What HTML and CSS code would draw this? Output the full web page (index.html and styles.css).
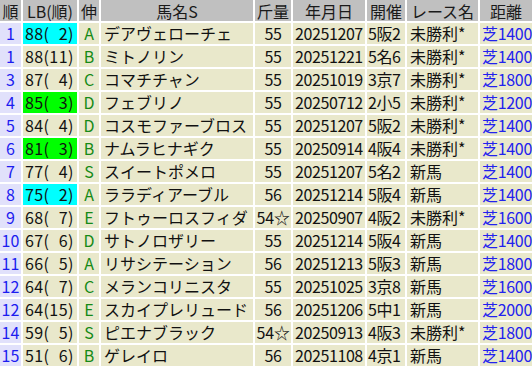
FILE: index.html
```html
<!DOCTYPE html>
<html lang="ja">
<head>
<meta charset="utf-8">
<title>LB</title>
<link rel="stylesheet" href="styles.css">
</head>
<body>
<div class="tbl">
  <div class="h">順</div><div class="h">LB(順)</div><div class="h">伸</div><div class="h">馬名S</div><div class="h">斤量</div><div class="h">年月日</div><div class="h">開催</div><div class="h">レース名</div><div class="h">距離</div>

  <div class="c rk">1</div><div class="c lb cyan">88(&#x2007;2)</div><div class="c nb">A</div><div class="c nm">デアヴェローチェ</div><div class="c wt">55</div><div class="c dt">20251207</div><div class="c pl">5阪2</div><div class="c rc">未勝利*</div><div class="c ds">芝1400</div>
  <div class="c rk">1</div><div class="c lb">88(11)</div><div class="c nb">B</div><div class="c nm">ミトノリン</div><div class="c wt">55</div><div class="c dt">20251221</div><div class="c pl">5名6</div><div class="c rc">未勝利*</div><div class="c ds">芝1400</div>
  <div class="c rk">3</div><div class="c lb">87(&#x2007;4)</div><div class="c nb">C</div><div class="c nm">コマチチャン</div><div class="c wt">55</div><div class="c dt">20251019</div><div class="c pl">3京7</div><div class="c rc">未勝利*</div><div class="c ds">芝1800</div>
  <div class="c rk">4</div><div class="c lb green">85(&#x2007;3)</div><div class="c nb">D</div><div class="c nm">フェブリノ</div><div class="c wt">55</div><div class="c dt">20250712</div><div class="c pl">2小5</div><div class="c rc">未勝利*</div><div class="c ds">芝1200</div>
  <div class="c rk">5</div><div class="c lb">84(&#x2007;4)</div><div class="c nb">D</div><div class="c nm">コスモファーブロス</div><div class="c wt">55</div><div class="c dt">20251207</div><div class="c pl">5阪2</div><div class="c rc">未勝利*</div><div class="c ds">芝1400</div>
  <div class="c rk">6</div><div class="c lb green">81(&#x2007;3)</div><div class="c nb">B</div><div class="c nm">ナムラヒナギク</div><div class="c wt">55</div><div class="c dt">20250914</div><div class="c pl">4阪4</div><div class="c rc">未勝利*</div><div class="c ds">芝1400</div>
  <div class="c rk">7</div><div class="c lb">77(&#x2007;4)</div><div class="c nb">S</div><div class="c nm">スイートポメロ</div><div class="c wt">55</div><div class="c dt">20251207</div><div class="c pl">5名2</div><div class="c rc">新馬</div><div class="c ds">芝1400</div>
  <div class="c rk">8</div><div class="c lb cyan">75(&#x2007;2)</div><div class="c nb">A</div><div class="c nm">ララディアーブル</div><div class="c wt">56</div><div class="c dt">20251214</div><div class="c pl">5阪4</div><div class="c rc">新馬</div><div class="c ds">芝1400</div>
  <div class="c rk">9</div><div class="c lb">68(&#x2007;7)</div><div class="c nb">E</div><div class="c nm">フトゥーロスフィダ</div><div class="c wt">54☆</div><div class="c dt">20250907</div><div class="c pl">4阪2</div><div class="c rc">未勝利*</div><div class="c ds">芝1600</div>
  <div class="c rk">10</div><div class="c lb">67(&#x2007;6)</div><div class="c nb">D</div><div class="c nm">サトノロザリー</div><div class="c wt">55</div><div class="c dt">20251214</div><div class="c pl">5阪4</div><div class="c rc">新馬</div><div class="c ds">芝1400</div>
  <div class="c rk">11</div><div class="c lb">66(&#x2007;5)</div><div class="c nb">A</div><div class="c nm">リサシテーション</div><div class="c wt">56</div><div class="c dt">20251213</div><div class="c pl">5阪3</div><div class="c rc">新馬</div><div class="c ds">芝1800</div>
  <div class="c rk">12</div><div class="c lb">64(&#x2007;7)</div><div class="c nb">C</div><div class="c nm">メランコリニスタ</div><div class="c wt">55</div><div class="c dt">20251025</div><div class="c pl">3京8</div><div class="c rc">新馬</div><div class="c ds">芝1600</div>
  <div class="c rk">12</div><div class="c lb">64(15)</div><div class="c nb">E</div><div class="c nm">スカイプレリュード</div><div class="c wt">56</div><div class="c dt">20251206</div><div class="c pl">5中1</div><div class="c rc">新馬</div><div class="c ds">芝2000</div>
  <div class="c rk">14</div><div class="c lb">59(&#x2007;5)</div><div class="c nb">S</div><div class="c nm">ピエナブラック</div><div class="c wt">54☆</div><div class="c dt">20250913</div><div class="c pl">4阪3</div><div class="c rc">未勝利*</div><div class="c ds">芝1800</div>
  <div class="c rk">15</div><div class="c lb">51(&#x2007;6)</div><div class="c nb">B</div><div class="c nm">ゲレイロ</div><div class="c wt">56</div><div class="c dt">20251108</div><div class="c pl">4京1</div><div class="c rc">新馬</div><div class="c ds">芝1400</div>
</div>
</body>
</html>
```

FILE: styles.css
```css
html, body {
  margin: 0;
  padding: 0;
  background: #ffffff;
}

body {
  font-family: "Noto Sans CJK JP", "Noto Sans", sans-serif;
  font-size: 16px;
  color: #111111;
}

.tbl {
  display: grid;
  grid-template-columns: 21px 54px 20px 152px 36px 72px 38px 71px 52px;
  grid-auto-rows: 21px;
  gap: 2px;
  width: 532px;
}

.h, .c {
  line-height: 21px;
  white-space: nowrap;
}

.h {
  background: #c0c0c0;
  text-align: center;
  color: #1a1a1a;
  line-height: 20px;
  padding-top: 1px;
}

.c {
  background: #e9e8cb;
}

.rk {
  background: #e1e1fb;
  color: #1c1cf0;
  text-align: center;
}

.lb {
  padding-left: 2px;
  letter-spacing: 0.4px;
}

.cyan { background: #00ffff; }
.green { background: #00ff00; }

.nb {
  text-align: center;
  color: #168a16;
}

.nm {
  padding-left: 3px;
}

.wt {
  text-align: center;
  letter-spacing: -0.3px;
}

.dt {
  padding-left: 2px;
  letter-spacing: -0.4px;
}

.pl {
  padding-left: 1px;
  letter-spacing: -0.4px;
}

.rc {
  padding-left: 3px;
}

.ds {
  padding-left: 2px;
  color: #2222ee;
  letter-spacing: -0.3px;
}
```
